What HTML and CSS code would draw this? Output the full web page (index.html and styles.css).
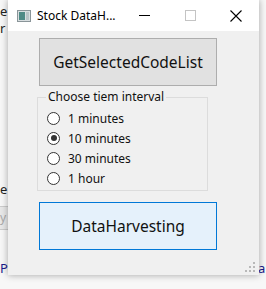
FILE: index.html
```html
<!DOCTYPE html>
<html>
  <head>
    <title>Stock DataHarvesting</title>
    <link rel="stylesheet" href="styles.css">
  </head>
  <body>
    <!-- bits of the window behind the dialog -->
    <div class="behind">
      <span class="bg-text t1">e</span>
      <span class="bg-text t2">r</span>
      <span class="bg-text t3">e</span>
      <span class="bg-field">y</span>
      <span class="bg-link l1">P</span>
      <span class="bg-link l2">a</span>
    </div>

    <div class="window">
      <div class="titlebar">
        <span class="app-icon">
          <svg width="14" height="12" viewBox="0 0 14 12">
            <rect x="0.5" y="0.5" width="13" height="11" fill="#d8dee0" stroke="#8a9599"/>
            <rect x="2" y="2" width="6" height="8" fill="#4f8a86"/>
            <rect x="9" y="2" width="3" height="8" fill="#b9c4c7"/>
          </svg>
        </span>
        <span class="title">Stock DataH...</span>
        <span class="caption-btn minimize">
          <svg width="11" height="11" viewBox="0 0 11 11"><line x1="0" y1="5.5" x2="11" y2="5.5" stroke="#000" stroke-width="1"/></svg>
        </span>
        <span class="caption-btn maximize">
          <svg width="11" height="11" viewBox="0 0 11 11"><rect x="0.5" y="0.5" width="10" height="10" fill="none" stroke="#c4c4c4"/></svg>
        </span>
        <span class="caption-btn close">
          <svg width="12" height="12" viewBox="0 0 12 12"><path d="M0.5 0.5 L11.5 11.5 M11.5 0.5 L0.5 11.5" stroke="#000" stroke-width="1.1"/></svg>
        </span>
      </div>

      <div class="content">
        <button class="btn">GetSelectedCodeList</button>

        <fieldset class="group">
          <legend>Choose tiem interval</legend>
          <label class="radio"><span class="dot"></span>1 minutes</label>
          <label class="radio"><span class="dot checked"></span>10 minutes</label>
          <label class="radio"><span class="dot"></span>30 minutes</label>
          <label class="radio"><span class="dot"></span>1 hour</label>
        </fieldset>

        <button class="btn focused">DataHarvesting</button>
      </div>

      <div class="grip">
        <svg width="10" height="10" viewBox="0 0 10 10" fill="#b8b8b8">
          <rect x="8" y="0" width="2" height="2"/>
          <rect x="4" y="4" width="2" height="2"/><rect x="8" y="4" width="2" height="2"/>
          <rect x="0" y="8" width="2" height="2"/><rect x="4" y="8" width="2" height="2"/><rect x="8" y="8" width="2" height="2"/>
        </svg>
      </div>
    </div>
  </body>
</html>
```

FILE: styles.css
```css
body {
  margin: 0;
  width: 266px;
  height: 289px;
  overflow: hidden;
  position: relative;
  background-color: #f7f7f7;
  font-family: "Noto Sans", "Liberation Sans", sans-serif;
}

.behind {
  position: absolute;
  left: 0;
  top: 0;
  width: 266px;
  height: 289px;
}

.bg-text {
  position: absolute;
  left: 0;
  font-size: 13px;
  color: #222;
}

.t1 { top: 2px; }
.t2 { top: 19px; }
.t3 { top: 180px; }

.bg-field {
  position: absolute;
  left: 0;
  top: 206px;
  width: 8px;
  height: 22px;
  font-size: 12px;
  color: #aaa;
  line-height: 22px;
  border-top: 1px solid #ccc;
  border-bottom: 1px solid #ccc;
  background-color: #e8e8e8;
}

.bg-link {
  position: absolute;
  top: 259px;
  font-size: 13px;
  color: #1a1a8c;
}

.l1 { left: 0; }
.l2 { left: 258px; }

.window {
  position: absolute;
  left: 8px;
  top: 0;
  width: 251px;
  height: 275px;
  background-color: #f0f0f0;
  box-shadow: 0 0 7px rgba(0,0,0,.35);
}

.titlebar {
  height: 31px;
  background-color: #fff;
  display: flex;
  align-items: center;
}

.app-icon {
  display: flex;
  margin-left: 9px;
  margin-right: 6px;
}

.title {
  font-size: 12px;
  color: #000;
  flex: 1;
}

.caption-btn {
  width: 46px;
  display: flex;
  justify-content: center;
}

.content {
  padding: 7px 0 0 31px;
}

.btn {
  display: block;
  width: 178px;
  height: 48px;
  margin: 0;
  padding: 0;
  border: 1px solid #adadad;
  background-color: #e1e1e1;
  font-family: "Noto Sans", "Liberation Sans", sans-serif;
  font-size: 15.5px;
  color: #111;
}

.btn.focused {
  border-color: #0078d7;
  background-color: #e5f1fb;
}

.group {
  margin: 4px 0 11px -2px;
  width: 171px;
  height: 101px;
  box-sizing: border-box;
  padding: 4px 0 0 9px;
  border: 1px solid #dcdcdc;
  font-size: 12px;
  color: #111;
}

.group legend {
  padding: 0 2px;
  margin-left: -1px;
  line-height: 14px;
}

.radio {
  display: flex;
  align-items: center;
  height: 20px;
}

.dot {
  width: 11px;
  height: 11px;
  border: 1px solid #333;
  border-radius: 50%;
  background-color: #fff;
  margin-right: 8px;
  position: relative;
}

.dot.checked::after {
  content: "";
  position: absolute;
  left: 2.5px;
  top: 2.5px;
  width: 6px;
  height: 6px;
  border-radius: 50%;
  background-color: #333;
}

.grip {
  position: absolute;
  right: 4px;
  bottom: 3px;
  display: flex;
}
```
